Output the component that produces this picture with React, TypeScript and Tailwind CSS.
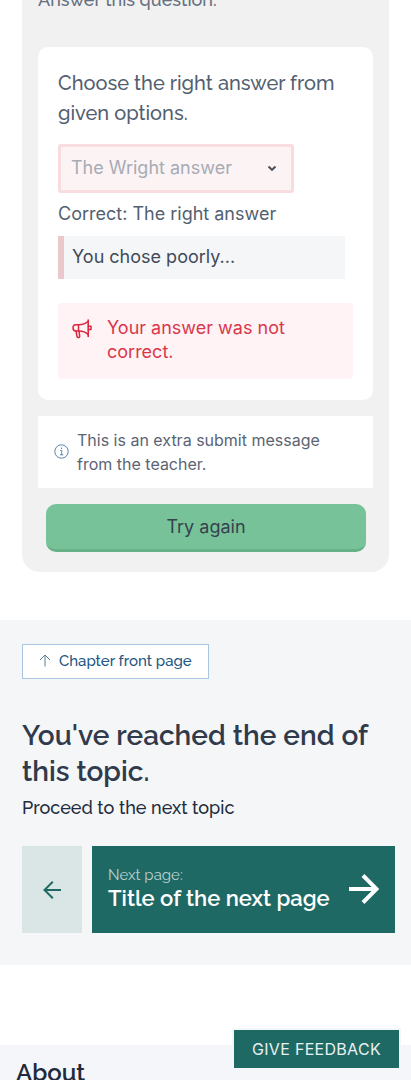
import React from "react";

function Megaphone() {
  return (
    <svg width="20" height="20" viewBox="0 0 20 20" fill="none" stroke="#d9283f" strokeWidth="1.5" strokeLinejoin="round" strokeLinecap="round">
      <path d="M16.200 1v16.500" strokeWidth="1.6" />
      <path d="M16 2.500C13.500 4.700 10.500 5.700 7 5.700H3.700C2 5.700 1 6.700 1 8.800s1 3.200 2.700 3.200H7c3.500 0 6.500 1 9 3.500" />
      <path d="M6.500 5.700V12M16.500 7.200h2.500v3.300h-2.500" />
      <path d="M4 12l1 5.500c.3 1.500 2.800 1.500 2.700-.2L7 12" />
    </svg>
  );
}

function InfoIcon() {
  return (
    <svg className="-mt-px shrink-0" width="15" height="15" viewBox="0 0 15 15" fill="none" stroke="#4678a5" strokeWidth="0.9">
      <circle cx="7.500" cy="7.500" r="6.700" />
      <path d="M6.200 6.500h1.500v4.300M6 10.800h3.300" />
      <circle cx="7.500" cy="4.200" r="0.7" fill="#4678a5" stroke="none" />
    </svg>
  );
}

function Exercise() {
  return (
    <section className="mx-[22px] h-[572px] rounded-b-[18px] bg-[#f1f1f1] px-4">
      <div className="h-[47px] overflow-hidden">
        <p className="-mt-[15px] whitespace-nowrap font-['Raleway',sans-serif] text-[18px] font-medium leading-[30px] text-[#667080]">Answer this question.</p>
      </div>
      <div className="h-[353px] rounded-[10px] bg-white px-5 pt-[21px]">
        <h3 className="whitespace-nowrap font-['Raleway',sans-serif] text-[20px] font-medium leading-[30px] text-[#535f70]">
          Choose the right answer from
          <br />
          given options.
        </h3>
        <div className="mt-4 flex h-[49px] w-[236px] items-center justify-between rounded-[3px] border-[3px] border-[#f8dcdf] bg-[#fcf3f4] pr-[14px] pl-[10px] text-[18px] text-[#a6abb5]">
          <span className="-mt-0.5">The Wright answer</span>
          <svg width="10" height="7" viewBox="0 0 10 7" fill="none" stroke="#4b5563" strokeWidth="2">
            <path d="M1.500 1.500L5 4.800l3.500-3.300" />
          </svg>
        </div>
        <p className="mt-[7px] whitespace-nowrap text-[18px] leading-[28px] text-[#535f70]">Correct: The right answer</p>
        <p className="mt-2 h-[43px] w-[287px] border-l-[6px] border-[#ebc8cc] bg-[#f5f6f8] pl-2 text-[18px] leading-[42px] text-[#414b59]">You chose poorly...</p>
        <div className="mt-6 flex h-[76px] rounded-[4px] bg-[#fff3f5] pt-[13px] pl-[14px] text-[18px] leading-6 text-[#d9384b]">
          <div className="mt-[3px] mr-[15px] w-5"><Megaphone /></div>
          <p className="whitespace-nowrap">Your answer was not<br />correct.</p>
        </div>
      </div>
      <div className="mt-4 flex h-[72px] items-center bg-white pl-4 text-[16px] leading-6 text-[#5b6473]">
        <InfoIcon />
        <p className="ml-2 whitespace-nowrap">This is an extra submit message<br />from the teacher.</p>
      </div>
      <button className="mx-2 mt-4 flex h-12 w-[320px] items-center justify-center rounded-[10px] border-b-[3px] border-[#67b187] bg-[#78c299] text-[18px] text-[#35424f]">Try again</button>
    </section>
  );
}

function TopicNavigation() {
  return (
    <section className="mt-12 h-[345px] bg-[#f4f6f8] pt-6 pr-4 pl-[22px] font-['Raleway',sans-serif]">
      <a className="flex h-[35px] w-[187px] items-center border border-[#aac5df] bg-white pb-0.5 pl-4 text-[#225684]">
        <svg width="12" height="13" viewBox="0 0 12 13" fill="none" stroke="#457395" strokeWidth="0.9">
          <path d="M6 12.500V1M1 6l5-5 5 5" />
        </svg>
        <span className="ml-2 whitespace-nowrap text-[15px] font-medium leading-5">Chapter front page</span>
      </a>
      <h2 className="mt-[39px] whitespace-nowrap text-[28px] font-semibold leading-9 text-[#303a4b]">You've reached the end of<br />this topic.</h2>
      <p className="mt-[4px] whitespace-nowrap text-[18px] font-medium leading-[28px] text-[#222c3e]">Proceed to the next topic</p>
      <div className="mt-[24px] flex h-[87px] gap-[10px]">
        <a className="flex w-[60px] items-center justify-center bg-[#dae6e6]">
          <svg width="18" height="18" viewBox="0 0 18 18" fill="none" stroke="#1f6964" strokeWidth="2">
            <path d="M18 9H1.500M9.800 .7L1.500 9l8.300 8.300" />
          </svg>
        </a>
        <a className="flex w-[303px] items-center justify-between bg-[#1f6964] pr-4 pb-0.5 pl-4 text-white">
          <div className="-mt-px whitespace-nowrap">
            <div className="text-[15px] leading-5 text-[#bcd2d0]">Next page:</div>
            <div className="-mt-px text-[22px] font-semibold leading-7">Title of the next page</div>
          </div>
          <svg width="30" height="30" viewBox="0 0 30 30" fill="none" stroke="white" strokeWidth="4">
            <path d="M0 15h27M14 1.500L27.500 15 14 28.500" />
          </svg>
        </a>
      </div>
    </section>
  );
}

export default function App() {
  return (
    <main className="relative h-[1080px] w-[411px] overflow-hidden bg-white font-['Inter',sans-serif]">
      <Exercise />
      <TopicNavigation />
      <footer className="mt-20 h-[35px] overflow-hidden bg-[#f5f6f9] pt-[12px] pl-4">
        <h2 className="font-['Raleway',sans-serif] text-[24px] font-semibold leading-8 text-[#202a3c]">About</h2>
      </footer>
      <button className="absolute top-[1028px] right-[10px] flex h-[42px] w-[169px] items-center justify-center whitespace-nowrap border-2 border-[#f5f6f9] bg-[#1f6964] text-[16px] tracking-[0.3px] text-[#e9f0f0]">GIVE FEEDBACK</button>
    </main>
  );
}
